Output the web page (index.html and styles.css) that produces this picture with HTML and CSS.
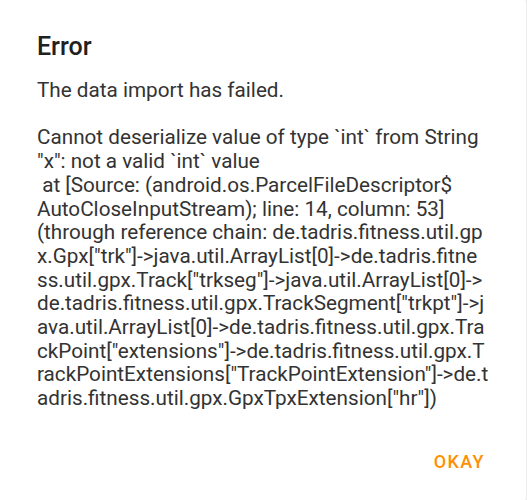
FILE: index.html
```html
<!DOCTYPE html>
<html lang="en">
<head>
  <meta charset="UTF-8">
  <meta name="viewport" content="width=device-width, initial-scale=1.0">
  <title>Error</title>
  <link rel="stylesheet" href="styles.css">
</head>
<body>
  <div class="dialog">
    <h2 class="dialog-titulo">Error</h2>
    <div class="dialog-mensaje">
      <div class="linea">The data import has failed.</div>
      <div class="linea">&nbsp;</div>
      <div class="linea">Cannot deserialize value of type `int` from String</div>
      <div class="linea">"x": not a valid `int` value</div>
      <div class="linea">&nbsp;at [Source: (android.os.ParcelFileDescriptor$</div>
      <div class="linea">AutoCloseInputStream); line: 14, column: 53]</div>
      <div class="linea">(through reference chain: de.tadris.fitness.util.gp</div>
      <div class="linea">x.Gpx["trk"]-&gt;java.util.ArrayList[0]-&gt;de.tadris.fitne</div>
      <div class="linea">ss.util.gpx.Track["trkseg"]-&gt;java.util.ArrayList[0]-&gt;</div>
      <div class="linea">de.tadris.fitness.util.gpx.TrackSegment["trkpt"]-&gt;j</div>
      <div class="linea">ava.util.ArrayList[0]-&gt;de.tadris.fitness.util.gpx.Tra</div>
      <div class="linea">ckPoint["extensions"]-&gt;de.tadris.fitness.util.gpx.T</div>
      <div class="linea">rackPointExtensions["TrackPointExtension"]-&gt;de.t</div>
      <div class="linea">adris.fitness.util.gpx.GpxTpxExtension["hr"])</div>
    </div>
    <div class="dialog-botones">
      <button class="boton-okay">OKAY</button>
    </div>
  </div>
</body>
</html>
```

FILE: styles.css
```css
body {
  margin: 0;
  background-color: #ececec;
  font-family: Roboto, "Noto Sans", sans-serif;
}

.dialog {
  width: 526px;
  height: 500px;
  background-color: white;
  border-radius: 0 2px 2px 0;
  box-sizing: border-box;
  padding: 32px 0 0 37px;
}

.dialog-titulo {
  margin: 0;
  font-size: 25px;
  font-weight: 500;
  color: #212121;
  line-height: 29px;
}

.dialog-mensaje {
  margin-top: 18px;
  font-size: 20.7px;
  line-height: 23.7px;
  color: #333;
}

.linea {
  white-space: nowrap;
}

.dialog-botones {
  display: flex;
  justify-content: flex-end;
  padding-right: 41px;
  margin-top: 40px;
}

.boton-okay {
  background: none;
  border: none;
  padding: 0;
  font-family: Roboto, "Noto Sans", sans-serif;
  font-size: 18px;
  font-weight: 500;
  letter-spacing: 1.4px;
  color: #ff8f00;
  cursor: pointer;
}
```
